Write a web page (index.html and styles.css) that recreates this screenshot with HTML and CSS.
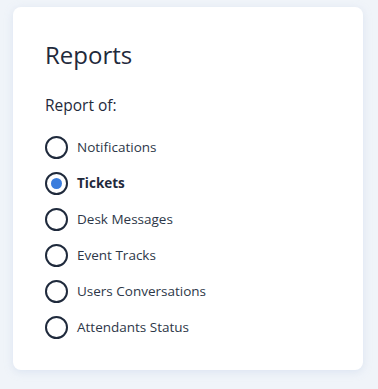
FILE: index.html
```html
<!DOCTYPE html>
<html lang="en">
<head>
    <meta charset="UTF-8">
    <meta name="viewport" content="width=device-width, initial-scale=1.0">
    <title>Reports</title>
    <link rel="stylesheet" href="styles.css">
</head>
<body>
    <div class="card">
        <h1 class="card-title">Reports</h1>
        <div class="field-label">Report of:</div>
        <div class="radio-list">
            <label class="radio-row"><span class="radio"></span>Notifications</label>
            <label class="radio-row checked"><span class="radio"></span>Tickets</label>
            <label class="radio-row"><span class="radio"></span>Desk Messages</label>
            <label class="radio-row"><span class="radio"></span>Event Tracks</label>
            <label class="radio-row"><span class="radio"></span>Users Conversations</label>
            <label class="radio-row"><span class="radio"></span>Attendants Status</label>
        </div>
    </div>
</body>
</html>
```

FILE: styles.css
```css
* {
    margin: 0;
    padding: 0;
    box-sizing: border-box;
    font-family: 'Open Sans', 'Noto Sans', sans-serif;
}

body {
    background: #f0f4f9;
    min-height: 100vh;
    padding: 7px 15px 0 13px;
    color: #1f2a3c;
}

.card {
    background: #ffffff;
    border-radius: 8px;
    padding: 33px 32px 31px;
    height: 363px;
    box-shadow: 0 2px 8px rgba(180, 198, 225, 0.35);
}

.card-title {
    font-size: 24px;
    font-weight: 400;
    line-height: 30px;
    color: #1f2a3c;
    margin-bottom: 25px;
}

.field-label {
    font-size: 15.5px;
    line-height: 20px;
    color: #1f2a3c;
    margin-bottom: 20px;
}

.radio-list {
    display: grid;
    gap: 12px;
}

.radio-row {
    display: flex;
    align-items: center;
    gap: 9px;
    font-size: 13.5px;
    line-height: 24px;
    color: #2d3748;
}

.radio {
    width: 23px;
    height: 23px;
    border: 2px solid #1f2a3c;
    border-radius: 50%;
    display: flex;
    align-items: center;
    justify-content: center;
}

.radio-row.checked {
    font-weight: 700;
    color: #1f2a3c;
}

.radio-row.checked .radio::after {
    content: '';
    width: 11px;
    height: 11px;
    border-radius: 50%;
    background: #3b7ddd;
}
```
